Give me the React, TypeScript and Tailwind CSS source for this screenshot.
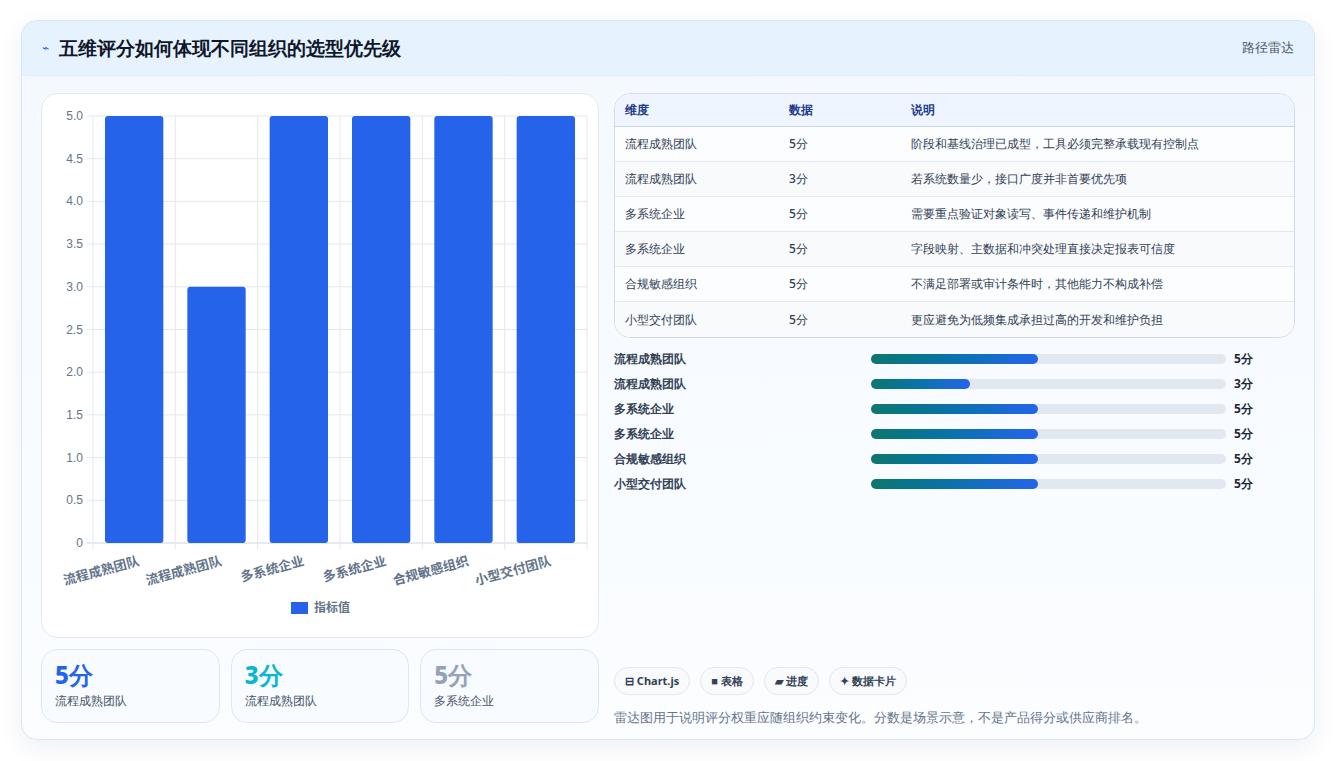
import React from 'react';

const rows = [
  { name: '流程成熟团队', score: 5, note: '阶段和基线治理已成型，工具必须完整承载现有控制点' },
  { name: '流程成熟团队', score: 3, note: '若系统数量少，接口广度并非首要优先项' },
  { name: '多系统企业', score: 5, note: '需要重点验证对象读写、事件传递和维护机制' },
  { name: '多系统企业', score: 5, note: '字段映射、主数据和冲突处理直接决定报表可信度' },
  { name: '合规敏感组织', score: 5, note: '不满足部署或审计条件时，其他能力不构成补偿' },
  { name: '小型交付团队', score: 5, note: '更应避免为低频集成承担过高的开发和维护负担' },
];

function BarChart() {
  const left = 51;
  const right = 545;
  const top = 22;
  const bottom = 449;
  const slot = (right - left) / rows.length;
  const ticks = [0, 0.5, 1, 1.5, 2, 2.5, 3, 3.5, 4, 4.5, 5];
  const y = (v: number) => bottom - ((bottom - top) * v) / 5;
  return (
    <svg width="558" height="543" viewBox="0 0 558 543" className="block">
      {ticks.map((t) => (
        <g key={t}>
          <line x1={left - 6} x2={right} y1={y(t)} y2={y(t)} stroke={t === 0 ? '#cbd5e1' : '#e5e7eb'} />
          <text x={left - 10} y={y(t) + 4} textAnchor="end" fontSize="12" fill="#64748b" fontFamily="Liberation Sans, sans-serif">
            {t === 0 ? '0' : t.toFixed(1)}
          </text>
        </g>
      ))}
      {rows.map((_, i) => (
        <line key={i} x1={left + slot * i} x2={left + slot * i} y1={top} y2={bottom + 6} stroke="#e5e7eb" />
      ))}
      <line x1={right} x2={right} y1={top} y2={bottom + 6} stroke="#e5e7eb" />
      {rows.map((r, i) => (
        <rect key={i} x={left + slot * i + 12} y={y(r.score)} width={slot - 24} height={bottom - y(r.score)} rx="3" fill="#2563eb" />
      ))}
      {rows.map((r, i) => (
        <text
          key={i}
          x={left + slot * i + slot / 2 + 6}
          y={bottom + 22}
          textAnchor="end"
          fontSize="13"
          fontWeight="600"
          fill="#64748b"
          transform={`rotate(-15 ${left + slot * i + slot / 2 + 6} ${bottom + 22})`}
          fontFamily="Noto Sans CJK SC, sans-serif"
        >
          {r.name}
        </text>
      ))}
      <rect x="249" y="508" width="17" height="12" fill="#2563eb" />
      <text x="272" y="518" fontSize="12" fill="#64748b" fontWeight="600" fontFamily="Noto Sans CJK SC, sans-serif">指标值</text>
    </svg>
  );
}

export default function App() {
  return (
    <div className="min-h-screen bg-white px-[21px] py-[20px] font-['Noto_Sans_CJK_SC',sans-serif]">
      <div className="h-[720px] overflow-hidden rounded-2xl border border-[#d4e6f7] bg-gradient-to-b from-[#f4f9ff] to-[#fbfdff] shadow-[0_8px_24px_rgba(30,64,120,0.08)]">
        <div className="flex h-[55px] items-center justify-between border-b border-[#dbeafe] bg-[#e6f2fe] px-5">
          <div className="flex items-center gap-2.5">
            <span className="text-xs text-[#2563eb]">⌁</span>
            <h1 className="text-[19px] font-bold text-[#0f172a]">五维评分如何体现不同组织的选型优先级</h1>
          </div>
          <span className="text-[13px] text-[#475569]">路径雷达</span>
        </div>
        <div className="flex gap-[15px] px-[19px] pt-[17px]">
          <div className="flex w-[558px] flex-col gap-[11px]">
            <div className="rounded-2xl border border-[#e2e8f0] bg-white">
              <BarChart />
            </div>
            <div className="grid grid-cols-3 gap-[11px]">
              {[
                { v: '5分', c: 'text-[#2563eb]', l: '流程成熟团队' },
                { v: '3分', c: 'text-[#06b6d4]', l: '流程成熟团队' },
                { v: '5分', c: 'text-[#94a3b8]', l: '多系统企业' },
              ].map((s, i) => (
                <div key={i} className="h-[74px] rounded-2xl border border-[#dbe7f5] bg-[#f8fbff] px-[13px] pt-[10px]">
                  <div className={`text-[24px] font-extrabold leading-[30px] ${s.c}`}>{s.v}</div>
                  <div className="mt-[2px] text-[12px] text-[#475569]">{s.l}</div>
                </div>
              ))}
            </div>
          </div>
          <div className="flex w-[684px] flex-col">
            <div className="overflow-hidden rounded-2xl border border-[#cfdcec] bg-white text-[12px]">
              <div className="grid h-[33px] grid-cols-[164px_122px_1fr] items-center border-b border-[#cbd5e1] bg-[#eef5fe] px-[10px] font-semibold text-[#1e3a8a]">
                <span>维度</span>
                <span>数据</span>
                <span>说明</span>
              </div>
              {rows.map((r, i) => (
                <div
                  key={i}
                  className={`grid h-[35px] grid-cols-[164px_122px_1fr] items-center px-[10px] font-medium text-[#334155] ${i < rows.length - 1 ? 'border-b border-[#e2e8f0]' : ''} ${i % 2 ? 'bg-[#f8fafc]' : 'bg-[#fbfdff]'}`}
                >
                  <span>{r.name}</span>
                  <span>{r.score}分</span>
                  <span>{r.note}</span>
                </div>
              ))}
            </div>
            <div className="mt-[8px] flex flex-col">
              {rows.map((r, i) => (
                <div key={i} className="flex h-[25px] items-center text-[12px] font-semibold text-[#334155]">
                  <span className="w-[257px]">{r.name}</span>
                  <div className="h-[10px] w-[355px] rounded-full bg-[#e2e8f0]">
                    <div
                      className="h-full rounded-full bg-gradient-to-r from-[#0f766e] to-[#2563eb]"
                      style={{ width: r.score === 5 ? '47%' : '28%' }}
                    />
                  </div>
                  <span className="ml-[8px] font-bold text-[#1e293b]">{r.score}分</span>
                </div>
              ))}
            </div>
            <div className="mt-[171px] flex gap-[10px]">
              {['⊟ Chart.js', '■ 表格', '▰ 进度', '✦ 数据卡片'].map((c) => (
                <span
                  key={c}
                  className="flex h-[28px] items-center rounded-full border border-[#e2e8f0] bg-[#f8fafc] px-[10px] text-[11px] font-bold text-[#334155]"
                >
                  {c}
                </span>
              ))}
            </div>
            <p className="mt-[13px] text-[13px] text-[#64748b]">雷达图用于说明评分权重应随组织约束变化。分数是场景示意，不是产品得分或供应商排名。</p>
          </div>
        </div>
      </div>
    </div>
  );
}
